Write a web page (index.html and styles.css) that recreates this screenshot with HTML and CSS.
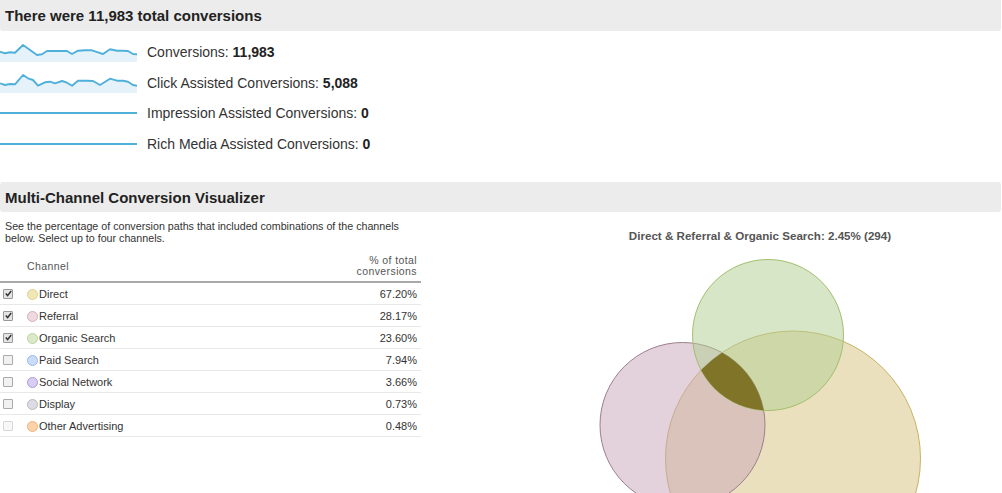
FILE: index.html
```html
<!DOCTYPE html>
<html>
<head>
<meta charset="utf-8">
<link rel="stylesheet" href="styles.css">
</head>
<body>
<div class="page">
  <div class="bar"><h1 class="bar-title">There were 11,983 total conversions</h1></div>
  <ul class="metrics">
    <li class="metric">
      <svg class="spark" width="137" height="20" viewBox="0 0 137 20">
        <polygon class="spark-fill" points="0,9.7 5,11.3 10,10.3 15,10.7 23,3 30,8 37,13 42,12.3 47,9 53,9 62,9 67,9 72,12 78,8.7 85,8.3 92,8.3 98,10.3 103,12 110,7.3 117,8.7 123,8.7 128,9 133,12 137,12.3 137,20 0,20"/>
        <polyline class="spark-line" points="0,9.7 5,11.3 10,10.3 15,10.7 23,3 30,8 37,13 42,12.3 47,9 53,9 62,9 67,9 72,12 78,8.7 85,8.3 92,8.3 98,10.3 103,12 110,7.3 117,8.7 123,8.7 128,9 133,12 137,12.3"/>
      </svg>
      <span class="metric-text">Conversions: <b>11,983</b></span>
    </li>
    <li class="metric">
      <svg class="spark" width="137" height="20" viewBox="0 0 137 20">
        <polygon class="spark-fill" points="0,10.3 5,12 10,11 15,11.3 23,2 28,5.3 33,7 38,12.7 45,9.3 50,8.7 55,10.3 62,8 67,9.7 72,12.7 78,7.7 87,7.7 93,8 100,12 110,5.7 117,7.7 123,7.7 128,8.7 133,12 137,12.7 137,20 0,20"/>
        <polyline class="spark-line" points="0,10.3 5,12 10,11 15,11.3 23,2 28,5.3 33,7 38,12.7 45,9.3 50,8.7 55,10.3 62,8 67,9.7 72,12.7 78,7.7 87,7.7 93,8 100,12 110,5.7 117,7.7 123,7.7 128,8.7 133,12 137,12.7"/>
      </svg>
      <span class="metric-text">Click Assisted Conversions: <b>5,088</b></span>
    </li>
    <li class="metric">
      <svg class="spark" width="137" height="20" viewBox="0 0 137 20">
        <line class="spark-line" x1="0" y1="10" x2="137" y2="10"/>
      </svg>
      <span class="metric-text">Impression Assisted Conversions: <b>0</b></span>
    </li>
    <li class="metric">
      <svg class="spark" width="137" height="20" viewBox="0 0 137 20">
        <line class="spark-line" x1="0" y1="10" x2="137" y2="10"/>
      </svg>
      <span class="metric-text">Rich Media Assisted Conversions: <b>0</b></span>
    </li>
  </ul>

  <div class="bar bar-second"><h2 class="bar-title">Multi-Channel Conversion Visualizer</h2></div>

  <div class="viz">
    <div class="viz-left">
      <p class="desc">See the percentage of conversion paths that included combinations of the channels<br>below. Select up to four channels.</p>
      <table class="channels">
        <thead>
          <tr>
            <th class="col-check"></th>
            <th class="col-name">Channel</th>
            <th class="col-pct">% of total<br>conversions</th>
          </tr>
        </thead>
        <tbody>
          <tr>
            <td class="col-check"><span class="cb checked"><svg width="7" height="7" viewBox="0 0 7 7"><path d="M0.8 3.6 L2.6 5.6 L6.2 1" /></svg></span></td>
            <td class="col-name"><span class="dot dot-direct"></span>Direct</td>
            <td class="col-pct">67.20%</td>
          </tr>
          <tr>
            <td class="col-check"><span class="cb checked"><svg width="7" height="7" viewBox="0 0 7 7"><path d="M0.8 3.6 L2.6 5.6 L6.2 1" /></svg></span></td>
            <td class="col-name"><span class="dot dot-referral"></span>Referral</td>
            <td class="col-pct">28.17%</td>
          </tr>
          <tr>
            <td class="col-check"><span class="cb checked"><svg width="7" height="7" viewBox="0 0 7 7"><path d="M0.8 3.6 L2.6 5.6 L6.2 1" /></svg></span></td>
            <td class="col-name"><span class="dot dot-organic"></span>Organic Search</td>
            <td class="col-pct">23.60%</td>
          </tr>
          <tr>
            <td class="col-check"><span class="cb"></span></td>
            <td class="col-name"><span class="dot dot-paid"></span>Paid Search</td>
            <td class="col-pct">7.94%</td>
          </tr>
          <tr>
            <td class="col-check"><span class="cb"></span></td>
            <td class="col-name"><span class="dot dot-social"></span>Social Network</td>
            <td class="col-pct">3.66%</td>
          </tr>
          <tr>
            <td class="col-check"><span class="cb"></span></td>
            <td class="col-name"><span class="dot dot-display"></span>Display</td>
            <td class="col-pct">0.73%</td>
          </tr>
          <tr>
            <td class="col-check"><span class="cb disabled"></span></td>
            <td class="col-name"><span class="dot dot-other"></span>Other Advertising</td>
            <td class="col-pct">0.48%</td>
          </tr>
        </tbody>
      </table>
    </div>
    <div class="viz-right">
      <div class="venn-title">Direct &amp; Referral &amp; Organic Search: 2.45% (294)</div>
      <svg class="venn" width="484" height="248" viewBox="0 0 484 248">
        <defs>
          <clipPath id="clip-green"><circle cx="250" cy="90" r="75.5"/></clipPath>
          <clipPath id="clip-pink"><circle cx="164.5" cy="180" r="82.5"/></clipPath>
        </defs>
        <circle class="c-yellow" cx="275" cy="213.5" r="127.5"/>
        <circle class="c-pink" cx="164.5" cy="180" r="82.5"/>
        <circle class="c-green" cx="250" cy="90" r="75.5"/>
        <g clip-path="url(#clip-green)">
          <circle class="c-triple" cx="275" cy="213.5" r="127.5" clip-path="url(#clip-pink)"/>
        </g>
      </svg>
    </div>
  </div>
</div>
</body>
</html>
```

FILE: styles.css
```css
html, body {
  margin: 0;
  padding: 0;
  background: #fff;
  overflow: hidden;
}
body {
  font-family: "Liberation Sans", Arial, sans-serif;
  color: #333;
}
.page {
  width: 1002px;
  height: 493px;
  overflow: hidden;
}
.bar {
  width: 1001px;
  height: 31px;
  background: #ececec;
  border-radius: 0 0 3px 3px;
  display: flex;
  align-items: center;
  box-sizing: border-box;
  padding-left: 5px;
}
.bar-second {
  margin-top: 23px;
  height: 30px;
  border-radius: 3px;
}
.bar-title {
  margin: 0;
  font-size: 15px;
  font-weight: bold;
  color: #222;
}
.metrics {
  list-style: none;
  margin: 6px 0 0 0;
  padding: 0;
}
.metric {
  height: 30.5px;
  display: flex;
  align-items: center;
  gap: 10px;
}
.spark {
  display: block;
  flex: none;
}
.spark-fill {
  fill: #e6f2f9;
}
.spark-line {
  fill: none;
  stroke: #4fb0da;
  stroke-width: 1.9;
  stroke-linejoin: round;
}
.metric-text {
  font-size: 14px;
  color: #333;
}
.metric-text b {
  color: #222;
}
.viz {
  display: grid;
  grid-template-columns: 421px 484px;
  column-gap: 97px;
}
.desc {
  margin: 8px 0 0 5px;
  font-size: 10.7px;
  line-height: 12px;
  color: #333;
}
.channels {
  margin-top: 11px;
  width: 421px;
  border-collapse: collapse;
  font-size: 11px;
}
.channels th {
  font-weight: normal;
  font-size: 10.5px;
  letter-spacing: 0.4px;
  line-height: 11px;
  color: #555;
  padding: 0 0 4px 0;
  border-bottom: 2px solid #a9a9a9;
  vertical-align: middle;
}
.channels td {
  height: 21px;
  padding: 0;
  border-bottom: 1px solid #e8e8e8;
  color: #333;
  vertical-align: middle;
}
.col-check {
  width: 27px;
  text-align: left;
}
.col-name {
  text-align: left;
}
.channels th.col-pct, .channels td.col-pct {
  text-align: right;
  padding-right: 4px;
}
.cb {
  display: flex;
  align-items: center;
  justify-content: center;
  width: 8px;
  height: 8px;
  margin-left: 3px;
  border: 1px solid #aaa;
  border-radius: 1px;
  background: #f1f1f1;
}
.cb svg path {
  fill: none;
  stroke: #333;
  stroke-width: 1.5;
}
.cb.checked {
  background: #e4e4e4;
  border-color: #999;
}
.cb.disabled {
  border-color: #d8d8d8;
  background: #f7f7f7;
}
.dot {
  display: inline-block;
  width: 11px;
  height: 11px;
  border-radius: 50%;
  vertical-align: -2px;
  margin-right: 1px;
  box-sizing: border-box;
  border: 1px solid;
}
.dot-direct { background: #f1e6b6; border-color: #dfd193; }
.dot-referral { background: #efd8df; border-color: #d3b0bd; }
.dot-organic { background: #dbe9c9; border-color: #bfd39f; }
.dot-paid { background: #cadcfa; border-color: #9ab8ee; }
.dot-social { background: #d8cdf2; border-color: #ac9ad9; }
.dot-display { background: #dcdce4; border-color: #b9b9c5; }
.dot-other { background: #fcd2ab; border-color: #f2b27a; }
.viz-right {
  padding-top: 17px;
}
.venn-title {
  font-size: 11.6px;
  line-height: 13px;
  font-weight: bold;
  color: #555;
  text-align: center;
}
.venn {
  display: block;
  margin-top: 3px;
}
.c-yellow {
  fill: #d7c17b;
  fill-opacity: 0.5;
  stroke: #c6b366;
  stroke-width: 1;
}
.c-pink {
  fill: #c7a5b7;
  fill-opacity: 0.5;
  stroke: #9d7f8c;
  stroke-width: 1;
}
.c-green {
  fill: #b1cd91;
  fill-opacity: 0.5;
  stroke: #a3bf6e;
  stroke-width: 1;
}
.c-triple {
  fill: #807428;
}
```
